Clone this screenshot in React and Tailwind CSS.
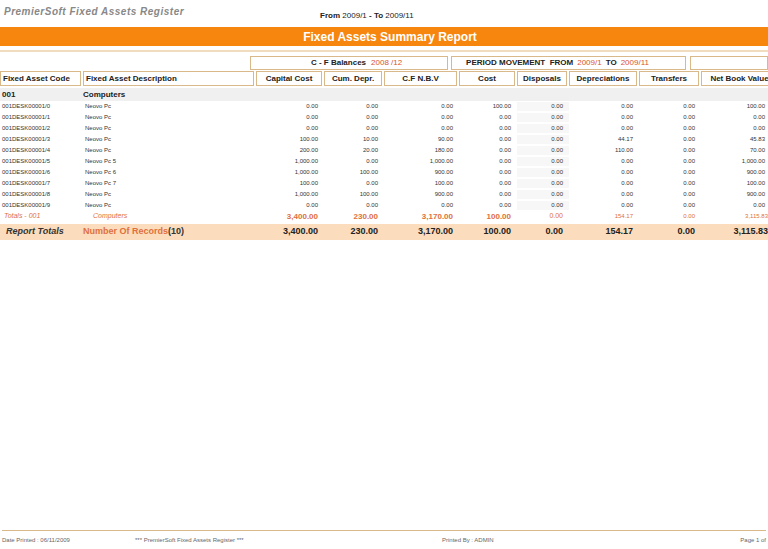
const W = ["w-[83px]", "w-[173px]", "w-[68px]", "w-[60px]", "w-[75px]", "w-[58px]", "w-[52px]", "w-[70px]", "w-[62px]", "w-[79px]"];
const heads = ["Fixed Asset Code", "Fixed Asset Description", "Capital Cost", "Cum. Depr.", "C.F  N.B.V", "Cost", "Disposals", "Depreciations", "Transfers", "Net Book Value"];

const rows = [
  ["001DESK00001/0", "Neovo Pc", "0.00", "0.00", "0.00", "100.00", "0.00", "0.00", "0.00", "100.00"],
  ["001DESK00001/1", "Neovo Pc", "0.00", "0.00", "0.00", "0.00", "0.00", "0.00", "0.00", "0.00"],
  ["001DESK00001/2", "Neovo Pc", "0.00", "0.00", "0.00", "0.00", "0.00", "0.00", "0.00", "0.00"],
  ["001DESK00001/3", "Neovo Pc", "100.00", "10.00", "90.00", "0.00", "0.00", "44.17", "0.00", "45.83"],
  ["001DESK00001/4", "Neovo Pc", "200.00", "20.00", "180.00", "0.00", "0.00", "110.00", "0.00", "70.00"],
  ["001DESK00001/5", "Neovo Pc 5", "1,000.00", "0.00", "1,000.00", "0.00", "0.00", "0.00", "0.00", "1,000.00"],
  ["001DESK00001/6", "Neovo Pc 6", "1,000.00", "100.00", "900.00", "0.00", "0.00", "0.00", "0.00", "900.00"],
  ["001DESK00001/7", "Neovo Pc 7", "100.00", "0.00", "100.00", "0.00", "0.00", "0.00", "0.00", "100.00"],
  ["001DESK00001/8", "Neovo Pc", "1,000.00", "100.00", "900.00", "0.00", "0.00", "0.00", "0.00", "900.00"],
  ["001DESK00001/9", "Neovo Pc", "0.00", "0.00", "0.00", "0.00", "0.00", "0.00", "0.00", "0.00"],
];
const tot = ["3,400.00", "230.00", "3,170.00", "100.00", "0.00", "154.17", "0.00", "3,115.83"];
const rep = ["3,400.00", "230.00", "3,170.00", "100.00", "0.00", "154.17", "0.00", "3,115.83"];

export default function App() {
  return (
    <div className="w-[768px] h-[549px] overflow-hidden bg-white flex flex-col text-[#222]" style={{ fontFamily: "Arial, 'Liberation Sans', sans-serif" }}>
      <div className="flex items-end h-[22px] pl-[4px]">
        <span className="italic font-bold text-[10px] text-[#888] tracking-[0.5px] mb-[3px]">PremierSoft Fixed Assets Register</span>
        <span className="ml-[136px] text-[8px] font-bold">From <span className="font-normal">2009/1</span>  - To <span className="font-normal">2009/11</span></span>
      </div>
      <div className="mt-[5px] h-[19px] bg-[#f7860f] flex items-center justify-center text-white font-bold text-[12px] pl-[12px]">Fixed Assets Summary Report</div>
      <div className="mt-[4px] h-[2px] bg-[#f2dcc0]" />
      <div className="mt-[4px] flex h-[14px] text-[8px] font-bold">
        <div className="w-[255px]" />
        <div className="w-[201px] border border-[#d9b98a] flex items-center pl-[60px] gap-[5px]">C - F Balances <span className="text-[#d9542c] font-normal">2008 /12</span></div>
        <div className="w-[3px]" />
        <div className="w-[239px] border border-[#d9b98a] flex items-center pl-[14px] gap-[4px]">PERIOD MOVEMENT &nbsp;FROM <span className="text-[#d9542c] font-normal">2009/1</span> TO <span className="text-[#d9542c] font-normal">2009/11</span></div>
        <div className="w-[4px]" />
        <div className="w-[80px] border border-[#d9b98a]" />
      </div>
      <div className="mt-[1px] flex h-[15px] text-[8px] font-bold">
        {heads.map((h, i) => (
          <div key={i} className={`${W[i]} pr-[2px] shrink-0`}>
            <div className={`h-full border border-[#d9b98a] flex items-center px-[2px] whitespace-nowrap ${i < 2 ? "" : "justify-center"}`}>{h}</div>
          </div>
        ))}
      </div>
      <div className="mt-[2px] h-[13px] bg-[#f0f0f0] flex items-center text-[8px] font-bold">
        <div className="w-[83px] pl-[2px]">001</div>
        <div>Computers</div>
      </div>
      {rows.map((r, k) => (
        <div key={k} className="flex h-[11px] items-center text-[6px] text-[#333]">
          {r.map((c, i) => (
            <div key={i} className={`${W[i]} shrink-0 whitespace-nowrap ${i < 2 ? "pl-[2px]" : i === 9 ? "text-right pr-[15px]" : "text-right pr-[6px]"} ${i === 6 ? "bg-[#f7f7f7]" : ""}`}>{c}</div>
          ))}
        </div>
      ))}
      <div className="flex h-[11px] items-center text-[7px] text-[#e0703c] italic">
        <div className="w-[83px] pl-[4px] shrink-0">Totals  - 001</div>
        <div className="w-[173px] shrink-0 pl-[10px]">Computers</div>
        {tot.map((c, i) => (
          <div key={i} className={`${W[i + 2]} shrink-0 whitespace-nowrap text-right not-italic ${i === 7 ? "pr-[12px] text-[6px]" : "pr-[6px]"} ${i < 4 ? "font-bold text-[8px]" : ""} ${i === 5 || i === 6 ? "text-[6px]" : ""}`}>{c}</div>
        ))}
      </div>
      <div className="mt-[2px] h-[16px] bg-[#fbdcbc] flex items-center text-[9px] font-bold">
        <div className="w-[83px] shrink-0 pl-[6px] italic text-[#333]">Report Totals</div>
        <div className="w-[173px] shrink-0 text-[#e0703c]">Number Of Records<span className="text-[#333]">(10)</span></div>
        {rep.map((c, i) => (
          <div key={i} className={`${W[i + 2]} shrink-0 text-right text-[#222] whitespace-nowrap ${i === 7 ? "pr-[12px]" : "pr-[6px]"}`}>{c}</div>
        ))}
      </div>
      <div className="flex-1" />
      <div className="h-[1px] bg-[#d9b98a] mx-[2px]" />
      <div className="h-[18px] flex items-center text-[6px] text-[#666]">
        <div className="w-[135px] pl-[2px]">Date Printed : 06/11/2009</div>
        <div className="w-[307px]">*** PremierSoft Fixed Assets Register ***</div>
        <div className="flex-1">Printed By : ADMIN</div>
        <div className="pr-[2px]">Page 1 of</div>
      </div>
    </div>
  );
}
